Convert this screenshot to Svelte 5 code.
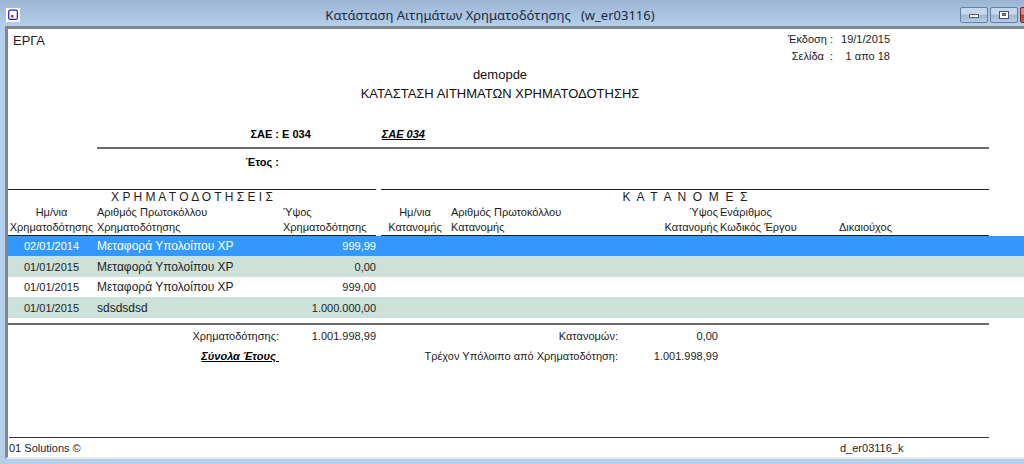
<script>
  const title = "Κατάσταση Αιτημάτων Χρηματοδότησης";
  let selected = 0;

  const rows = [
    { date: "02/01/2014", protocol: "Μεταφορά Υπολοίπου ΧΡ", amount: "999,99" },
    { date: "01/01/2015", protocol: "Μεταφορά Υπολοίπου ΧΡ", amount: "0,00" },
    { date: "01/01/2015", protocol: "Μεταφορά Υπολοίπου ΧΡ", amount: "999,00" },
    { date: "01/01/2015", protocol: "sdsdsdsd", amount: "1.000.000,00" }
  ];
</script>

<div class="window">
  <header class="titlebar">
    <svg class="app-icon" width="14" height="14" viewBox="0 0 14 14">
      <rect width="14" height="14" fill="#fff" />
      <rect x="2.7" y="2.2" width="8.6" height="9.2" rx="1.5" fill="#fff" stroke="#2418d8" stroke-width="1.2" />
      <rect x="5" y="7" width="2.4" height="2.4" fill="#8a3a20" />
    </svg>
    <div class="caption">{title}   (w_er03116)</div>
    <div class="controls">
      <button aria-label="Minimize">
        <svg width="12" height="8" viewBox="0 0 12 8"><rect x="1.5" y="3.5" width="9" height="3" fill="#fff" stroke="#555f6c" /></svg>
      </button>
      <button aria-label="Maximize">
        <svg width="10" height="8" viewBox="0 0 10 8"><rect x="0.5" y="0.5" width="9" height="7" fill="#fff" stroke="#4c5562" /><rect x="3.5" y="2.5" width="3" height="2" fill="#9ab" stroke="#4c5562" /></svg>
      </button>
      <button class="close" aria-label="Close"></button>
    </div>
  </header>

  <main class="report">
    <section class="top">
      <div class="company">ΕΡΓΑ</div>
      <dl class="meta">
        <dt>Έκδοση :</dt><dd>19/1/2015</dd>
        <dt>Σελίδα&nbsp; :</dt><dd>1 απο 18</dd>
      </dl>
    </section>

    <section class="heading">
      <div>demopde</div>
      <h1>ΚΑΤΑΣΤΑΣΗ ΑΙΤΗΜΑΤΩΝ ΧΡΗΜΑΤΟΔΟΤΗΣΗΣ</h1>
    </section>

    <section class="filters">
      <div class="filter sae">
        <span class="label">ΣΑΕ :</span>
        <span>Ε 034</span>
        <span class="link">ΣΑΕ 034</span>
      </div>
      <div class="filter">
        <span class="label">Έτος :</span>
      </div>
    </section>

    <table>
      <colgroup>
        <col class="c-date" />
        <col class="c-protocol" />
        <col class="c-amount" />
        <col class="c-gap" />
        <col class="c-date2" />
        <col class="c-protocol2" />
        <col class="c-amount2" />
        <col class="c-code" />
        <col />
        <col class="c-tail" />
      </colgroup>
      <thead>
        <tr class="groups">
          <th colspan="3">Χ Ρ Η Μ Α Τ Ο Δ Ο Τ Η Σ Ε Ι Σ</th>
          <td></td>
          <th colspan="5">Κ  Α  Τ  Α  Ν  Ο  Μ  Ε  Σ</th>
          <td></td>
        </tr>
        <tr class="names">
          <th class="center">Ημ/νια<br />Χρηματοδότησης</th>
          <th>Αριθμός Πρωτοκόλλου<br />Χρηματοδότησης</th>
          <th>Ύψος<br />Χρηματοδότησης</th>
          <td></td>
          <th class="center">Ημ/νια<br />Κατανομής</th>
          <th>Αριθμός Πρωτοκόλλου<br />Κατανομής</th>
          <th class="right">Ύψος<br />Κατανομής</th>
          <th>Ενάριθμος<br />Κωδικός Έργου</th>
          <th>Δικαιούχος</th>
          <td></td>
        </tr>
      </thead>
      <tbody>
        {#each rows as row, i}
          <tr class:selected={i === selected} on:click={() => (selected = i)}>
            <td class="center">{row.date}</td>
            <td class="protocol">{row.protocol}</td>
            <td class="right">{row.amount}</td>
            <td colspan="7"></td>
          </tr>
        {/each}
      </tbody>
    </table>

    <section class="totals">
      <span>Χρηματοδότησης:</span>
      <span>1.001.998,99</span>
      <span>Κατανομών:</span>
      <span>0,00</span>
      <span class="link">Σύνολα Έτους&nbsp;</span>
      <span></span>
      <span>Τρέχον Υπόλοιπο από Χρηματοδότηση:</span>
      <span>1.001.998,99</span>
    </section>

    <footer>
      <span>01 Solutions ©</span>
      <span class="code">d_er03116_k</span>
    </footer>
  </main>
</div>

<style>
  .window {
    min-height: 100vh;
    box-sizing: border-box;
    display: flex;
    flex-direction: column;
    padding: 0 0 5px 5px;
    overflow: hidden;
    background: #b5cfeb;
    font-family: "Liberation Sans", Arial, sans-serif;
    font-size: 11px;
    color: #1c1c24;
  }
  .titlebar {
    display: flex;
    align-items: center;
    height: 26px;
    margin-left: -5px;
    padding: 4px 0 0 6px;
    box-sizing: border-box;
    background: linear-gradient(#9ab4d2, #b5cfeb);
  }
  .caption {
    flex: 1;
    text-align: center;
    white-space: pre;
    font: 13px "Noto Sans", "Segoe UI", sans-serif;
    color: #1a2a3c;
  }
  .controls { display: flex; gap: 2px; margin-right: -24px; }
  .controls button {
    display: flex;
    align-items: center;
    justify-content: center;
    width: 28px;
    height: 16px;
    padding: 0;
    border: 1px solid #6b7f98;
    border-radius: 2px;
    background: linear-gradient(#c3d7ee 45%, #9db5d0 50%, #b4cdea);
  }
  .controls .close { border-color: #6e2a24; background: linear-gradient(#dd8a7c 45%, #c0392b 50%, #d0604e); }

  .report {
    flex: 1;
    display: flex;
    flex-direction: column;
    border-top: 3px solid #80868e;
    border-left: 3px solid #80868e;
    border-bottom: 2px solid #e6ebf0;
    background: #fff;
  }
  .top { display: flex; justify-content: space-between; padding: 2px 134px 0 5px; }
  .company { font-size: 13px; line-height: 20px; }
  .meta { display: grid; grid-template-columns: auto auto; column-gap: 8px; margin: 0; line-height: 17px; text-align: right; }
  .meta dd { margin: 0; }
  .heading { margin: 0 32px 0 0; text-align: center; font-size: 13px; line-height: 19px; color: #111; }
  h1 { margin: 0; font-size: 13px; font-weight: normal; }

  .filters { margin: 18px 35px 0 89px; font-weight: bold; color: #000; }
  .filter { display: flex; gap: 3px; line-height: 26px; }
  .filter .label { width: 182px; text-align: right; }
  .sae { border-bottom: 2px solid #6a6a6a; }
  .sae .link { margin-left: 68px; }
  .link { font-weight: bold; font-style: italic; text-decoration: underline; color: #000; }

  table { width: 100%; margin-top: 14px; table-layout: fixed; border-spacing: 0; }
  .c-date { width: 87px; }
  .c-protocol { width: 186px; }
  .c-amount { width: 95px; }
  .c-gap { width: 5px; }
  .c-date2 { width: 68px; }
  .c-protocol2 { width: 206px; }
  .c-amount2 { width: 63px; }
  .c-code { width: 119px; }
  .c-tail { width: 35px; }
  th, td { padding: 0 0 0 2px; text-align: left; font-weight: normal; white-space: pre; }
  th { vertical-align: bottom; }
  .groups th { height: 15px; padding: 0; border-top: 1px solid #222; text-align: center; font-size: 12px; line-height: 15px; }
  .names th { border-bottom: 1px solid #222; line-height: 15px; }
  .center { padding: 0; text-align: center; }
  .right { padding: 0; text-align: right; }
  tbody td { height: 20px; line-height: 20px; }
  tbody .protocol { font-size: 12px; }
  tbody tr:nth-child(even) td { height: 21px; background: #cce2d9; }
  tbody tr.selected td { background: #3399ff; color: #fff; }

  .totals {
    display: grid;
    grid-template-columns: 271px 97px 242px 100px;
    margin: 5px 35px 0 0;
    padding-top: 1px;
    border-top: 2px solid #6a6a6a;
    line-height: 20px;
    text-align: right;
  }

  footer { display: flex; justify-content: space-between; margin: auto 35px 0 1px; padding-top: 2px; border-top: 1px solid #333; line-height: 17px; }
  footer .code { width: 149px; }
</style>
